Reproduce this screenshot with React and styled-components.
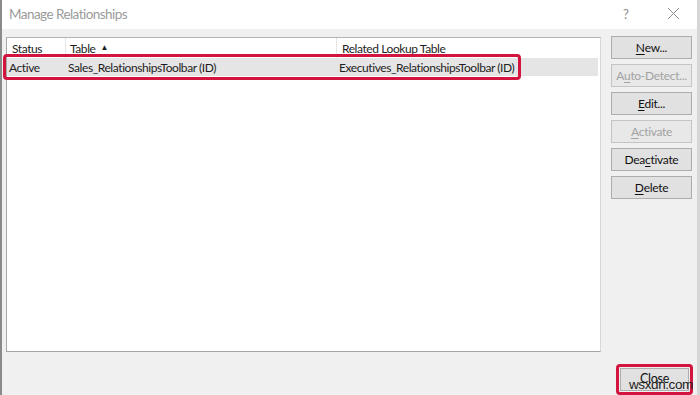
import React from "react";
import styled, { createGlobalStyle } from "styled-components";

const Global = createGlobalStyle`
  html, body { margin: 0; padding: 0; background: #f0f0f0; }
  body { font-family: Lato, "Segoe UI", "Noto Sans", sans-serif; }
  #root { width: 700px; height: 395px; }
`;

const Dialog = styled.div`
  position: relative;
  width: 700px;
  height: 395px;
  box-sizing: border-box;
  background: #f0f0f0;
  border-left: 2px solid #8a8a8a;
  border-right: 3px solid #d6d6d6;
  display: flex;
  flex-direction: column;
  overflow: hidden;
`;

const TitleBar = styled.div`
  height: 29px;
  flex: 0 0 29px;
  background: #ffffff;
  display: flex;
  align-items: center;
  padding-left: 7px;
  padding-bottom: 2px;
  box-sizing: border-box;
`;

const Title = styled.div`
  flex: 1;
  font-size: 13.5px;
  letter-spacing: -0.55px;
  color: #9b9b9b;
`;

const TitleButton = styled.div`
  width: ${(p) => p.$w}px;
  display: flex;
  justify-content: center;
  align-items: center;
  color: #8d8d8d;
  font-size: 13px;
`;

const Body = styled.div`
  flex: 1;
  display: flex;
  padding: 8px 0 0 4px;
  gap: 10px;
`;

const ListBox = styled.div`
  position: relative;
  width: 595px;
  height: 315px;
  box-sizing: border-box;
  background: #ffffff;
  border: 1px solid #a6a6a6;
  border-top-color: #b4b4b4;
  border-right-color: #d8d8d8;
  font-size: 12px;
  letter-spacing: -0.42px;
  color: #1e1e1e;
`;

const Row = styled.div`
  display: grid;
  grid-template-columns: 59px 271px 1fr;
  height: ${(p) => p.$h}px;
  align-items: center;
  margin-right: 2px;
  background: ${(p) => (p.$selected ? "#e5e5e5" : "transparent")};
`;

const HeaderCell = styled.div`
  height: 100%;
  display: flex;
  align-items: center;
  padding-left: ${(p) => p.$pad}px;
  border-right: ${(p) => (p.$sep ? "1px solid #e5e5e5" : "none")};
  white-space: nowrap;
`;

const Cell = styled.div`
  padding-left: ${(p) => p.$pad}px;
  white-space: nowrap;
`;

const SortArrow = styled.span`
  font-size: 8px;
  margin-left: 5px;
  position: relative;
  top: -1px;
`;

const Highlight = styled.div`
  position: absolute;
  left: -4px;
  top: 16px;
  width: 518px;
  height: 26px;
  box-sizing: border-box;
  border: 3px solid #d2143f;
  border-radius: 4px;
  pointer-events: none;
`;

const ButtonColumn = styled.div`
  display: flex;
  flex-direction: column;
  gap: 5px;
  margin-top: -1px;
`;

const Button = styled.div`
  width: 81px;
  height: 23px;
  box-sizing: border-box;
  display: flex;
  justify-content: center;
  align-items: center;
  background: ${(p) => (p.$disabled ? "#e8e8e8" : "#e1e1e1")};
  border: 1px solid ${(p) => (p.$disabled ? "#c4c4c4" : "#adadad")};
  color: ${(p) => (p.$disabled ? "#a2a2a2" : "#111")};
  font-size: 12px;
  letter-spacing: -0.3px;
  u { text-decoration: underline; text-underline-offset: 2px; }
`;

const Footer = styled.div`
  flex: 0 0 37px;
  display: flex;
  justify-content: flex-end;
  align-items: flex-start;
  padding-right: 4px;
  padding-top: 8px;
  box-sizing: border-box;
`;

const CloseWrap = styled.div`
  position: relative;
  border: 3px solid #d2143f;
  border-radius: 4px;
  padding: 1px;
`;

const CloseButton = styled(Button)`
  width: 69px;
  height: 23px;
  align-items: flex-start;
  padding-top: 2px;
  font-size: 12.5px;
`;

const Watermark = styled.div`
  position: absolute;
  left: 10px;
  top: 11px;
  font-family: "Liberation Sans", Arial, sans-serif;
  font-size: 13.5px;
  line-height: 14px;
  color: #222;
  letter-spacing: -0.4px;
  white-space: nowrap;
  pointer-events: none;
`;

export default function App() {
  return (
    <>
      <Global />
      <Dialog>
        <TitleBar>
          <Title>Manage Relationships</Title>
          <TitleButton $w={46}>?</TitleButton>
          <TitleButton $w={48}>
            <svg width="13" height="13" viewBox="0 0 13 13">
              <path d="M1 1 L12 12 M12 1 L1 12" stroke="#8d8d8d" strokeWidth="1" fill="none" />
            </svg>
          </TitleButton>
        </TitleBar>
        <Body>
          <ListBox>
            <Row $h={20}>
              <HeaderCell $pad={5} $sep>Status</HeaderCell>
              <HeaderCell $pad={4} $sep>
                Table<SortArrow>▲</SortArrow>
              </HeaderCell>
              <HeaderCell $pad={5}>Related Lookup Table</HeaderCell>
            </Row>
            <Row $h={18} $selected>
              <Cell $pad={2}>Active</Cell>
              <Cell $pad={2}>Sales_RelationshipsToolbar (ID)</Cell>
              <Cell $pad={2}>Executives_RelationshipsToolbar (ID)</Cell>
            </Row>
            <Highlight />
          </ListBox>
          <ButtonColumn>
            <Button><u>N</u>ew...</Button>
            <Button $disabled>A<u>u</u>to-Detect...</Button>
            <Button><u>E</u>dit...</Button>
            <Button $disabled><u>A</u>ctivate</Button>
            <Button>Dea<u>c</u>tivate</Button>
            <Button><u>D</u>elete</Button>
          </ButtonColumn>
        </Body>
        <Footer>
          <CloseWrap>
            <CloseButton>Close</CloseButton>
            <Watermark>wsxdn.com</Watermark>
          </CloseWrap>
        </Footer>
      </Dialog>
    </>
  );
}
